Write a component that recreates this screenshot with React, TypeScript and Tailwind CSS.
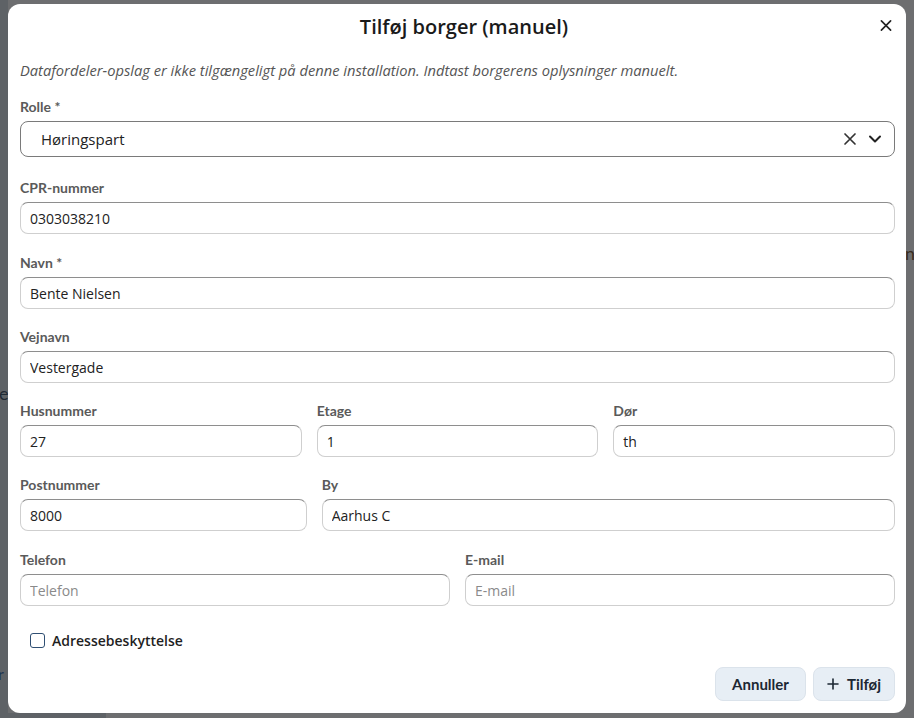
import React from "react";

const labelCls =
  "block text-[14px] leading-[16px] font-bold text-[#5a5a5a] font-['Lato',sans-serif]";
const inputCls =
  "mt-[6px] h-[32px] w-full rounded-[8px] border border-[#cfcfcf] border-t-[#8e8e8e] bg-white px-[9px] text-[14px] text-[#222] font-['Open_Sans',sans-serif] placeholder:text-[#8a8a8a] outline-none";

function Field({
  label,
  value,
  placeholder,
  className,
}: {
  label: string;
  value?: string;
  placeholder?: string;
  className?: string;
}) {
  return (
    <div className={className}>
      <label className={labelCls}>{label}</label>
      <input
        className={inputCls}
        defaultValue={value}
        placeholder={placeholder}
      />
    </div>
  );
}

export default function App() {
  return (
    <div className="relative w-[914px] h-[718px] overflow-hidden bg-[#6d6e70]">
      <div className="absolute left-0 top-0 w-[8px] h-[718px] bg-[#5e6266]" />
      <div className="absolute left-0 top-[713px] w-[106px] h-[5px] bg-[#5e6266]" />
      <div className="absolute left-[-1px] top-[380px] text-[18px] text-[#1f2933] font-['Lato',sans-serif]">
        e
      </div>
      <div className="absolute left-[-2px] top-[662px] text-[16px] text-[#1e3552] font-['Lato',sans-serif]">
        r
      </div>
      <div className="absolute left-[905px] top-[240px] text-[18px] text-[#3a2c20] font-['Lato',sans-serif]">
        nl
      </div>
      <div className="relative ml-[8px] pt-[4px]">
        <div className="w-[898px] h-[709px] bg-white rounded-[12px] flex flex-col">
          <div className="relative h-[46px] flex items-center justify-center pl-[14px]">
            <h2 className="text-[20px] font-semibold text-[#1a1a1a] font-['Open_Sans',sans-serif]">
              Tilføj borger (manuel)
            </h2>
            <button className="absolute right-[14px] top-[15px] w-[12px] h-[12px] flex items-center justify-center text-[#222]">
              <svg width="13" height="13" viewBox="0 0 13 13">
                <path
                  d="M1.5 1.5 L11.5 11.5 M11.5 1.5 L1.5 11.5"
                  stroke="#222"
                  strokeWidth="1.8"
                  strokeLinecap="round"
                />
              </svg>
            </button>
          </div>
          <div className="pl-[12px] pr-[11px] flex flex-col">
            <p className="mt-[10px] leading-[20px] text-[14.7px] italic text-[#555] font-['Open_Sans',sans-serif]">
              Datafordeler-opslag er ikke tilgængeligt på denne installation.
              Indtast borgerens oplysninger manuelt.
            </p>
            <div className="mt-[19px]">
              <label className={labelCls}>Rolle *</label>
              <div className="mt-[6px] h-[36px] w-full rounded-[8px] border border-[#7a7a7a] flex items-center pl-[20px] pr-[12px]">
                <span className="flex-1 text-[15px] text-[#222] font-['Open_Sans',sans-serif]">
                  Høringspart
                </span>
                <svg width="14" height="14" viewBox="0 0 14 14" className="mr-[11px]">
                  <path
                    d="M2 2 L12 12 M12 2 L2 12"
                    stroke="#333"
                    strokeWidth="1.7"
                    strokeLinecap="round"
                  />
                </svg>
                <svg width="14" height="14" viewBox="0 0 14 14">
                  <path
                    d="M2 4.5 L7 9.5 L12 4.5"
                    stroke="#222"
                    strokeWidth="2"
                    fill="none"
                    strokeLinecap="round"
                    strokeLinejoin="round"
                  />
                </svg>
              </div>
            </div>
            <Field className="mt-[23px]" label="CPR-nummer" value="0303038210" />
            <Field className="mt-[21px]" label="Navn *" value="Bente Nielsen" />
            <Field className="mt-[20px]" label="Vejnavn" value="Vestergade" />
            <div className="mt-[20px] grid grid-cols-3 gap-x-[15px]">
              <Field label="Husnummer" value="27" />
              <Field label="Etage" value="1" />
              <Field label="Dør" value="th" />
            </div>
            <div className="mt-[20px] grid grid-cols-[1fr_2fr] gap-x-[15px]">
              <Field label="Postnummer" value="8000" />
              <Field label="By" value="Aarhus C" />
            </div>
            <div className="mt-[21px] grid grid-cols-2 gap-x-[15px]">
              <Field label="Telefon" placeholder="Telefon" />
              <Field label="E-mail" placeholder="E-mail" />
            </div>
            <label className="mt-[25px] ml-[10px] h-[18px] flex items-center gap-[7px]">
              <span className="w-[15px] h-[15px] rounded-[3px] border-[1.5px] border-[#2f4f73] bg-white" />
              <span className="text-[14px] font-semibold text-[#1f1f1f] font-['Open_Sans',sans-serif]">
                Adressebeskyttelse
              </span>
            </label>
            <div className="mt-[18px] flex justify-end gap-[7px]">
              <button className="h-[34px] w-[91px] rounded-[8px] border border-[#dbe3eb] bg-[#e7eef5] text-[15px] font-bold text-[#1c2733] font-['Lato',sans-serif]">
                Annuller
              </button>
              <button className="h-[34px] w-[82px] rounded-[8px] border border-[#dbe3eb] bg-[#e7eef5] text-[15px] font-bold text-[#1c2733] font-['Lato',sans-serif] flex items-center justify-center gap-[8px]">
                <svg width="12" height="12" viewBox="0 0 12 12">
                  <path
                    d="M6 1 L6 11 M1 6 L11 6"
                    stroke="#1c2733"
                    strokeWidth="1.6"
                    strokeLinecap="round"
                  />
                </svg>
                Tilføj
              </button>
            </div>
          </div>
        </div>
      </div>
    </div>
  );
}
